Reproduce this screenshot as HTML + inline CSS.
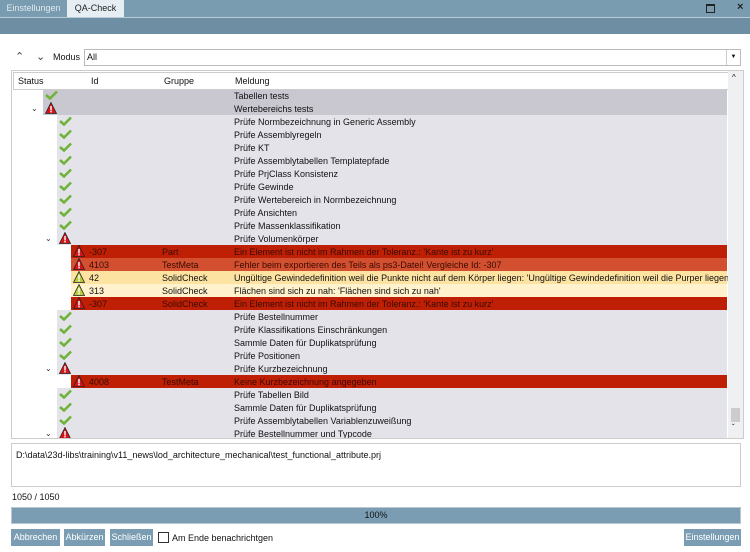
<!DOCTYPE html>
<html><head><style>
body{margin:0;width:750px;height:552px;background:#fff;font-family:"Liberation Sans",sans-serif;font-size:9px;color:#111;position:relative;overflow:hidden}
.a{position:absolute}
.row{position:absolute;left:0;height:13px;width:715px}
.row span{position:absolute;top:1px;white-space:nowrap;line-height:12px}
.btn{position:absolute;top:529px;height:17px;background:#7a9db3;color:#fff;font-size:9px;line-height:17px;text-align:center}
</style></head><body>
<div class="a" style="left:0;top:0;width:750px;height:17px;background:#7a9cb1"></div>
<div class="a" style="left:0;top:0;width:67px;height:17px;line-height:17px;color:#dfe8ee;text-align:center">Einstellungen</div>
<div class="a" style="left:67px;top:0;width:57px;height:17px;line-height:17px;background:#e6eef3;color:#222;text-align:center">QA-Check</div>
<div class="a" style="left:170px;top:3px;width:0;height:0"></div>
<div class="a" style="left:706px;top:4px;width:7px;height:6px;border:1px solid #222;border-top-width:2px"></div>
<div class="a" style="left:737px;top:1px;font-size:11px;font-weight:bold;color:#222">×</div>
<div class="a" style="left:0;top:17px;width:750px;height:16px;background:#6e8ea3;border-top:1px solid #b9cbd6"></div>

<div class="a" style="left:15px;top:50px;font-size:11px;color:#444">⌃</div>
<div class="a" style="left:36px;top:50px;font-size:11px;color:#444">⌄</div>
<div class="a" style="left:53px;top:52px">Modus</div>
<div class="a" style="left:84px;top:49px;width:655px;height:15px;border:1px solid #bbb"><span style="position:absolute;left:2px;top:2px">All</span><span style="position:absolute;right:0;top:0;width:13px;height:15px;border-left:1px solid #ccc;font-size:6px;text-align:center;line-height:15px">▼</span></div>

<div class="a" style="left:11px;top:70px;width:731px;height:367px;border:1px solid #ccc;overflow:hidden">
<div id="rows" class="a" style="left:-11px;top:-70px"></div>
<div class="a" style="left:1px;top:1px;width:714px;height:16px;border:1px solid #ccc;background:#fff">
<span class="a" style="left:4px;top:3px">Status</span><span class="a" style="left:77px;top:3px">Id</span><span class="a" style="left:150px;top:3px">Gruppe</span><span class="a" style="left:221px;top:3px">Meldung</span></div>
<div class="a" style="left:716px;top:0;width:15px;height:367px;background:#eef0f2"><div class="a" style="left:3px;top:337px;width:9px;height:14px;background:#ccc"></div><div class="a" style="left:4px;top:2px;font-size:8px">^</div><div class="a" style="left:4px;top:352px;font-size:8px">ˇ</div></div>
</div>

<div class="a" style="left:11px;top:443px;width:728px;height:42px;border:1px solid #ccc"><span style="position:absolute;left:4px;top:6px">D:\data\23d-libs\training\v11_news\lod_architecture_mechanical\test_functional_attribute.prj</span></div>
<div class="a" style="left:12px;top:492px">1050 / 1050</div>
<div class="a" style="left:11px;top:507px;width:728px;height:15px;background:#7a9db3;border:1px solid #b7c6cf;text-align:center;line-height:15px">100%</div>
<div class="btn" style="left:11px;width:49px">Abbrechen</div>
<div class="btn" style="left:64px;width:41px">Abkürzen</div>
<div class="btn" style="left:110px;width:43px">Schließen</div>
<div class="a" style="left:158px;top:532px;width:9px;height:9px;border:1px solid #333"></div>
<div class="a" style="left:172px;top:533px">Am Ende benachrichtgen</div>
<div class="btn" style="left:684px;width:57px">Einstellungen</div>

<script>
var R=[
[0,'ok','','','Tabellen tests',''],
[0,'err','','','Wertebereichs tests','',1],
[1,'ok','','','Prüfe Normbezeichnung in Generic Assembly'],
[1,'ok','','','Prüfe Assemblyregeln'],
[1,'ok','','','Prüfe KT'],
[1,'ok','','','Prüfe Assemblytabellen Templatepfade'],
[1,'ok','','','Prüfe PrjClass Konsistenz'],
[1,'ok','','','Prüfe Gewinde'],
[1,'ok','','','Prüfe Wertebereich in Normbezeichnung'],
[1,'ok','','','Prüfe Ansichten'],
[1,'ok','','','Prüfe Massenklassifikation'],
[1,'err','','','Prüfe Volumenkörper','',1],
[2,'err','-307','Part',"Ein Element ist nicht im Rahmen der Toleranz.: 'Kante ist zu kurz'",'#bf2005'],
[2,'err','4103','TestMeta','Fehler beim exportieren des Teils als ps3-Datei! Vergleiche Id: -307','#d25030'],
[2,'warn','42','SolidCheck',"Ungültige Gewindedefinition weil die Punkte nicht auf dem Körper liegen: 'Ungültige Gewindedefinition weil die Purper liegen'",'#fde3a2'],
[2,'warn','313','SolidCheck',"Flächen sind sich zu nah: 'Flächen sind sich zu nah'",'#fff2cc'],
[2,'err','-307','SolidCheck',"Ein Element ist nicht im Rahmen der Toleranz.: 'Kante ist zu kurz'",'#bf2005'],
[1,'ok','','','Prüfe Bestellnummer'],
[1,'ok','','','Prüfe Klassifikations Einschränkungen'],
[1,'ok','','','Sammle Daten für Duplikatsprüfung'],
[1,'ok','','','Prüfe Positionen'],
[1,'err','','','Prüfe Kurzbezeichnung','',1],
[2,'err','4008','TestMeta','Keine Kurzbezeichnung angegeben','#bf2005'],
[1,'ok','','','Prüfe Tabellen Bild'],
[1,'ok','','','Sammle Daten für Duplikatsprüfung'],
[1,'ok','','','Prüfe Assemblytabellen Variablenzuweißung'],
[1,'err','','','Prüfe Bestellnummer und Typcode','',1]];
var h='';
R.forEach(function(r,i){
 var y=88+i*13, lv=r[0], x0=[42,56,70][lv], bg=r[5]||(lv==0?'#c9c8d1':'#e4e3ea');
 var ix=x0+2;
 var ic=r[1]=='ok'?'<span style="left:'+ix+'px;top:1px"><svg width="13" height="10"><path d="M1 5L5 8.5L12 1.5" fill="none" stroke="#6fb33a" stroke-width="2.6"/></svg></span>':
 '<span style="left:'+ix+'px;top:0"><svg width="12" height="12"><path d="M6 0.5L11.5 11.5H0.5Z" fill="'+(r[1]=='err'?'#d8141a':'#b9cc3a')+'" stroke="#222" stroke-width="0.8"/><rect x="5.3" y="4" width="1.4" height="4.5" fill="#fff"/><rect x="5.3" y="9" width="1.4" height="1.4" fill="#fff"/></svg></span>';
 var ex=r[6]?'<span style="left:'+(x0-12)+'px;color:#333;font-size:8px">⌄</span>':'';
 var tc=(r[5]=='#bf2005'||r[5]=='#d25030')?'#3a0a00':'#111';
 h+='<div class="row" style="top:'+y+'px"><div class="a" style="left:'+x0+'px;top:0;width:'+(715-x0+11)+'px;height:13px;background:'+bg+'"></div>'+ex+ic+
 '<span style="left:88px;color:'+tc+'">'+r[2]+'</span><span style="left:161px;color:'+tc+'">'+r[3]+'</span><span style="left:233px;color:'+tc+'">'+r[4]+'</span></div>';
});
document.getElementById('rows').innerHTML=h;
</script>
</body></html>
